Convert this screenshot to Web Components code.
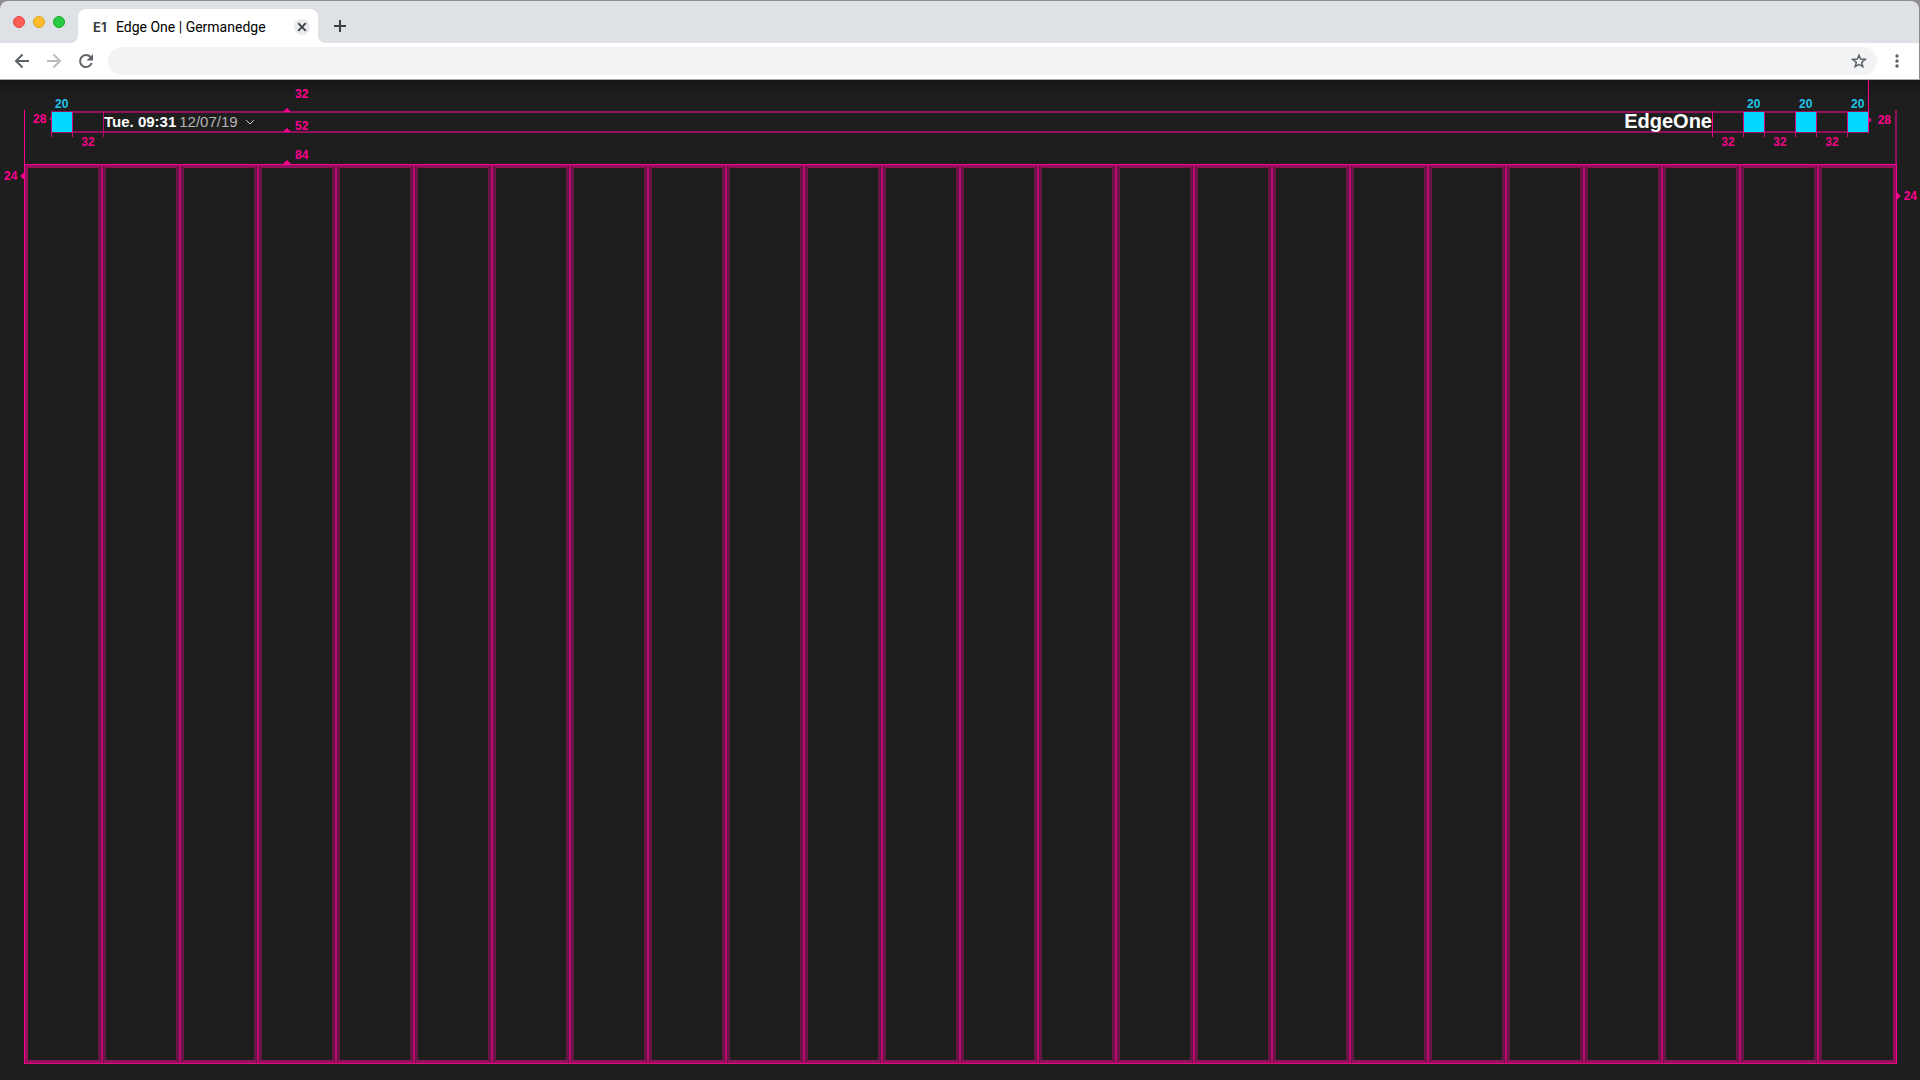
<!DOCTYPE html>
<html lang="en">
<head>
<meta charset="utf-8">
<title>Edge One | Germanedge</title>
<style>
  body {
    margin: 0;
    background: #1e1e1e;
    font-family: "Liberation Sans", Arial, sans-serif;
  }
</style>
</head>
<body>
<edge-window></edge-window>

<script>
class BrowserTab extends HTMLElement {
  constructor() {
    super()
    this.attachShadow({ mode: "open" })
    this.shadowRoot.innerHTML = `
    <style>
      :host {
        position: relative;
        display: flex;
        align-items: center;
        box-sizing: border-box;
        width: 240px;
        height: 34px;
        padding: 2px 8px 0 15px;
        border-radius: 8px 8px 0 0;
        background: #fff;
        color: #000;
        font: 14px/20px Roboto, sans-serif;
      }
      :host::before,
      :host::after {
        content: "";
        position: absolute;
        bottom: 0;
        width: 8px;
        height: 8px;
      }
      :host::before {
        right: 100%;
        background: radial-gradient(circle at 0 0, transparent 8px, #fff 8px);
      }
      :host::after {
        left: 100%;
        background: radial-gradient(circle at 100% 0, transparent 8px, #fff 8px);
      }
      .mark {
        width: 23px;
        color: #3c4043;
        font: 700 13px/20px Inter, sans-serif;
      }
      .title {
        flex: 1;
        white-space: nowrap;
      }
      button {
        display: flex;
        padding: 0;
        border: 0;
        border-radius: 50%;
        background: #e8eaed;
      }
    </style>
    <span class="mark">E1</span>
    <span class="title"><slot></slot></span>
    <button aria-label="Close tab">
      <svg width="16" height="16" viewBox="0 0 16 16" fill="none" stroke="#3c4043" stroke-width="1.8"><path d="M4.2 4.2l7.6 7.6M11.8 4.2l-7.6 7.6"/></svg>
    </button>
  `
  }
}

customElements.define("browser-tab", BrowserTab)

class BrowserChrome extends HTMLElement {
  constructor() {
    super()
    this.attachShadow({ mode: "open" })
    this.shadowRoot.innerHTML = `
    <style>
      :host {
        display: block;
        padding: 1px 1px 0 0;
        background: #8e8c8e;
        border-bottom: 1px solid #a9a9a9;
      }
      button {
        display: flex;
        padding: 0;
        border: 0;
        background: none;
      }
      .strip {
        display: flex;
        align-items: flex-end;
        height: 42px;
        padding-left: 13px;
        border-radius: 8px 8px 0 0;
        background: #dee1e6;
      }
      .lights {
        display: flex;
        gap: 8px;
        margin-right: 13px;
        padding-bottom: 15px;
      }
      .lights i {
        box-sizing: border-box;
        width: 12px;
        height: 12px;
        border: 1px solid #e2463f;
        border-radius: 50%;
        background: #ff5f57;
      }
      .lights i:nth-child(2) {
        border-color: #e1a116;
        background: #ffbd2e;
      }
      .lights i:nth-child(3) {
        border-color: #12ac28;
        background: #28ca41;
      }
      .new {
        margin: 0 0 9px 14px;
      }
      .toolbar {
        display: flex;
        align-items: center;
        height: 36px;
        padding: 0 14px;
        background: #fff;
      }
      .nav {
        display: flex;
        gap: 16px;
        margin-right: 14px;
      }
      .address {
        display: flex;
        flex: 1;
        align-items: center;
        height: 28px;
        padding: 0 10px 0 16px;
        border-radius: 14px;
        background: #f1f3f4;
      }
      input {
        flex: 1;
        border: 0;
        outline: 0;
        background: none;
        font: 14px/20px Roboto, sans-serif;
      }
      .more {
        margin-left: 12px;
      }
    </style>

    <div class="strip">
      <div class="lights"><i></i><i></i><i></i></div>
      <browser-tab>Edge One | Germanedge</browser-tab>
      <button class="new" aria-label="New tab">
        <svg width="16" height="16" viewBox="0 0 16 16" stroke="#3c4043" stroke-width="2"><path d="M8 2v12M2 8h12"/></svg>
      </button>
    </div>

    <div class="toolbar">
      <div class="nav">
        <button aria-label="Back">
          <svg width="16" height="16" viewBox="0 0 16 16" fill="none" stroke="#5f6368" stroke-width="2"><path d="M15 8H2.5M8.5 1.5L2 8l6.5 6.5"/></svg>
        </button>
        <button aria-label="Forward">
          <svg width="16" height="16" viewBox="0 0 16 16" fill="none" stroke="#babcbe" stroke-width="2"><path d="M1 8h12.5M7.5 1.5L14 8l-6.5 6.5"/></svg>
        </button>
        <button aria-label="Reload">
          <svg width="16" height="16" viewBox="0 0 16 16"><path d="M13.7 10A6 6 0 1 1 12.5 4" fill="none" stroke="#5f6368" stroke-width="2"/><path d="M15 1v6.5H8.5z" fill="#5f6368"/></svg>
        </button>
      </div>
      <div class="address">
        <input type="text" aria-label="Address">
        <button aria-label="Bookmark">
          <svg width="16" height="16" viewBox="0 0 16 16" fill="none" stroke="#5f6368" stroke-width="1.5"><path d="M8 2.2l1.6 3.9 4.6.3-3.5 2.9 1.1 4.4L8 11.3l-3.8 2.4 1.100-4.400-3.500-2.900 4.600-.300z"/></svg>
        </button>
      </div>
      <button class="more" aria-label="Menu">
        <svg width="16" height="16" viewBox="0 0 16 16" fill="#5f6368"><circle cx="8" cy="3" r="1.7"/><circle cx="8" cy="8" r="1.7"/><circle cx="8" cy="13" r="1.7"/></svg>
      </button>
    </div>
  `
  }
}

customElements.define("browser-chrome", BrowserChrome)

// Pink measure label with a small arrow, placed by its parent
class SpecMark extends HTMLElement {
  constructor() {
    super()
    this.attachShadow({ mode: "open" })
    this.shadowRoot.innerHTML = `
    <style>
      :host {
        display: flex;
        align-items: center;
        color: #ff0090;
        font: bold 12px/12px "Liberation Sans", Arial, sans-serif;
      }
      i {
        width: 4px;
        height: 8px;
        background: currentColor;
        clip-path: polygon(0 50%, 100% 0, 100% 100%);
      }
      :host([arrow="left"]) {
        flex-direction: row-reverse;
        gap: 3px;
      }
      :host([arrow="right"]) {
        gap: var(--mark-gap, 6px);
      }
      :host([arrow="right"]) i {
        clip-path: polygon(0 0, 100% 50%, 0 100%);
      }
      :host([arrow="up"]) {
        align-items: flex-end;
        gap: 4px;
      }
      :host([arrow="up"]) i {
        width: 8px;
        height: 4px;
        clip-path: polygon(50% 0, 100% 100%, 0 100%);
      }
      span {
        display: block;
      }
      :host([arrow="up"]) span {
        padding-bottom: var(--mark-lift, 2px);
      }
    </style>
    <i></i><span><slot></slot></span>
  `
  }
}

customElements.define("spec-mark", SpecMark)

// 20px placeholder block with its size above
class SpecBlock extends HTMLElement {
  constructor() {
    super()
    this.attachShadow({ mode: "open" })
    this.shadowRoot.innerHTML = `
    <style>
      :host {
        position: relative;
        z-index: 1;
        display: block;
        width: 20px;
        height: 20px;
        background: #00d8ff;
      }
      :host::before,
      :host::after {
        content: "";
        position: absolute;
        top: -1px;
        width: 1px;
        height: 26px;
        background: #d00a7c;
      }
      :host::before {
        right: 100%;
      }
      :host::after {
        left: 100%;
      }
      :host([last])::after {
        top: -32px;
        height: 53px;
        background: #ff0090;
      }
      span {
        position: absolute;
        bottom: 22px;
        left: 3px;
        color: #22c3ea;
        font: bold 12px/12px "Liberation Sans", Arial, sans-serif;
      }
    </style>
    <span><slot></slot></span>
  `
  }
}

customElements.define("spec-block", SpecBlock)

// Empty space between two blocks with its width below
class SpecGap extends HTMLElement {
  constructor() {
    super()
    this.attachShadow({ mode: "open" })
    this.shadowRoot.innerHTML = `
    <style>
      :host {
        position: relative;
        display: block;
        width: 32px;
        height: 20px;
        color: #f0058a;
        font: bold 12px/12px "Liberation Sans", Arial, sans-serif;
        text-align: center;
      }
      :host([edge])::after {
        content: "";
        position: absolute;
        top: -1px;
        width: 1px;
        height: 26px;
        background: #b80a70;
      }
      :host([edge="start"])::after {
        left: 0;
        background: #ff0090;
      }
      :host([edge="end"])::after {
        right: 0;
      }
      span {
        position: absolute;
        top: 24px;
        left: 0;
        right: 0;
      }
    </style>
    <span><slot></slot></span>
  `
  }
}

customElements.define("spec-gap", SpecGap)

class EdgeHeader extends HTMLElement {
  constructor() {
    super()
    this.attachShadow({ mode: "open" })
    this.shadowRoot.innerHTML = `
    <style>
      :host {
        position: relative;
        display: block;
        padding: 32px 52px;
        background: linear-gradient(#171717, #1e1e1e 20px);
      }
      .row {
        position: relative;
        display: flex;
        align-items: center;
        justify-content: space-between;
        height: 20px;
      }
      .rule {
        position: absolute;
        left: 0;
        right: 0;
        top: -1px;
        height: 18px;
        border: solid #94105c;
        border-width: 2px 0;
      }
      .group {
        position: relative;
        display: flex;
        align-items: center;
      }
      .clock {
        display: flex;
        align-items: center;
        gap: 3px;
        padding: 0;
        border: 0;
        background: none;
        color: #b4b4b4;
        font: 15px/20px "Liberation Sans", Arial, sans-serif;
      }
      .clock b {
        color: #fff;
      }
      .clock svg {
        margin-left: 4px;
      }
      .brand {
        color: #fff;
        font: bold 20px/20px "Liberation Sans", Arial, sans-serif;
        padding-bottom: 2px;
      }
      .side {
        position: absolute;
        top: 30px;
        bottom: 0;
        width: 1px;
        background: #ff0090;
      }
      .side.left {
        left: 24px;
      }
      .side.right {
        right: 23px;
        width: 2px;
        background: #94105c;
      }
      spec-mark {
        position: absolute;
      }
      .start {
        left: 33px;
        top: 33px;
      }
      .end {
        right: 29px;
        top: 34px;
      }
      .top,
      .middle,
      .bottom {
        left: 283px;
      }
      .top {
        --mark-lift: 12px;
        bottom: 52px;
      }
      .middle {
        --mark-lift: 0px;
        bottom: 32px;
      }
      .bottom {
        --mark-lift: 3px;
        bottom: 0;
      }
    </style>

    <div class="side left"></div>
    <div class="side right"></div>
    <div class="row">
      <div class="rule"></div>
      <div class="group">
        <spec-block>20</spec-block>
        <spec-gap edge="end">32</spec-gap>
        <button class="clock">
          <b>Tue. 09:31</b><span>12/07/19</span>
          <svg width="10" height="6" viewBox="0 0 10 6" fill="none" stroke="#c8c8c8"><path d="M1 1l4 4 4-4"/></svg>
        </button>
      </div>
      <div class="group">
        <span class="brand">EdgeOne</span>
        <spec-gap edge="start">32</spec-gap>
        <spec-block>20</spec-block>
        <spec-gap>32</spec-gap>
        <spec-block>20</spec-block>
        <spec-gap>32</spec-gap>
        <spec-block last>20</spec-block>
      </div>
    </div>

    <spec-mark arrow="left" class="start">28</spec-mark>
    <spec-mark arrow="right" class="end">28</spec-mark>
    <spec-mark arrow="up" class="top">32</spec-mark>
    <spec-mark arrow="up" class="middle">52</spec-mark>
    <spec-mark arrow="up" class="bottom">84</spec-mark>
  `
  }
}

customElements.define("edge-header", EdgeHeader)

class ColumnGrid extends HTMLElement {
  constructor() {
    super()
    this.attachShadow({ mode: "open" })
    this.shadowRoot.innerHTML = `
    <style>
      :host {
        position: relative;
        display: flex;
        padding: 0 24px 16px;
      }
      .columns {
        display: grid;
        flex: 1;
        grid-auto-flow: column;
        grid-auto-columns: 1fr;
      }
      .column {
        display: flex;
        border: 1px solid #b80a70;
        border-top-color: #ff0090;
        border-bottom-color: #e60a84;
      }
      .column::before {
        content: "";
        flex: 1;
        border: 3px solid #6a1545;
        border-top-color: #94105c;
        border-bottom-color: #94105c;
      }
      .column:first-child {
        border-left-color: #ff0090;
      }
      .column:first-child::before {
        border-left-color: #94105c;
      }
      .column:last-child {
        margin-right: -1px;
        border-right-color: #ff0090;
      }
      .column:last-child::before {
        border-right-color: #94105c;
      }
      spec-mark {
        position: absolute;
      }
      .start {
        left: 4px;
        top: 6px;
      }
      .end {
        --mark-gap: 3px;
        right: 3px;
        top: 26px;
      }
    </style>
    <div class="columns"></div>
    <spec-mark arrow="left" class="start">24</spec-mark>
    <spec-mark arrow="right" class="end">24</spec-mark>
  `
  }

  connectedCallback() {
    const columns = this.shadowRoot.querySelector(".columns")
    const count = Number(this.getAttribute("count"))
    columns.innerHTML = '<div class="column"></div>'.repeat(count)
  }
}

customElements.define("column-grid", ColumnGrid)

class EdgeWindow extends HTMLElement {
  constructor() {
    super()
    this.attachShadow({ mode: "open" })
    this.shadowRoot.innerHTML = `
    <style>
      :host {
        display: flex;
        flex-direction: column;
        min-height: 100vh;
      }
      column-grid {
        flex: 1;
      }
    </style>
    <browser-chrome></browser-chrome>
    <edge-header></edge-header>
    <column-grid count="24"></column-grid>
  `
  }
}

customElements.define("edge-window", EdgeWindow)
</script>
</body>
</html>
